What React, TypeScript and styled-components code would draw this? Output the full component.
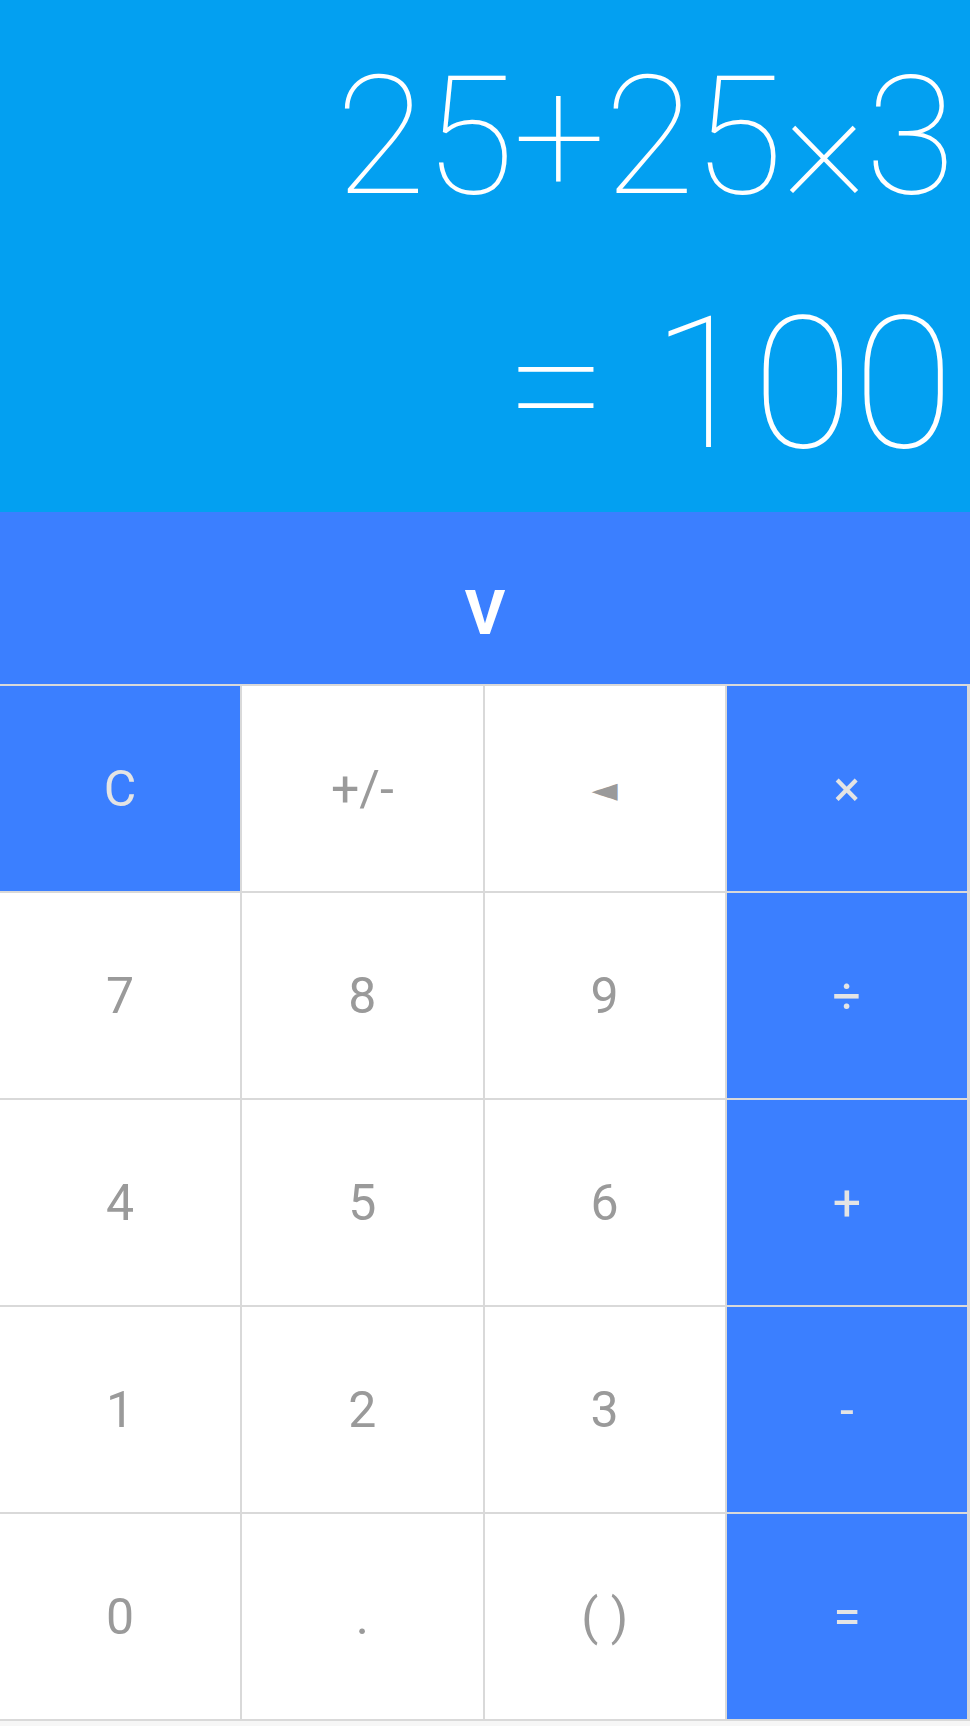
import React from "react"
import styled, { createGlobalStyle } from "styled-components"

const colors = {
  sky: "#03a0f1",
  blue: "#3b7fff",
  line: "#d9d9d9",
  keyText: "#9a9a9a",
  lightText: "#e4e4e4",
  page: "#f6f6f6",
}

const GlobalStyle = createGlobalStyle`
  html, body {
    margin: 0;
    padding: 0;
    background: ${colors.page};
    font-family: Roboto, "Liberation Sans", sans-serif;
  }
  * {
    box-sizing: border-box;
  }
`

const Wrapper = styled.div`
  width: 970px;
  display: flex;
  flex-direction: column;
`

const Display = styled.div`
  height: 512px;
  background: ${colors.sky};
  color: white;
  display: flex;
  flex-direction: column;
  align-items: flex-end;
  padding: 54px 16px 0 0;
  font-weight: 100;
`

const Expression = styled.div`
  font-size: 165px;
  line-height: 1;
  letter-spacing: -1.5px;
  white-space: nowrap;
`

const Result = styled.div`
  font-size: 184px;
  line-height: 1;
  margin-top: 73px;
  white-space: nowrap;
`

const Toggle = styled.div`
  height: 172px;
  background: ${colors.blue};
  color: white;
  display: flex;
  justify-content: center;
  padding-top: 70px;
  font-size: 62px;
  font-weight: 700;
  line-height: 1;
`

const Keypad = styled.div`
  display: grid;
  grid-template-columns: repeat(4, 1fr);
  grid-template-rows: repeat(5, 205px);
  gap: 2px;
  padding: 2px 3px 2px 0;
  background: ${colors.line};
`

interface KeyProps {
  $accent?: boolean
}

const Key = styled.div<KeyProps>`
  display: flex;
  justify-content: center;
  align-items: center;
  background: ${props => (props.$accent ? colors.blue : "white")};
  color: ${props => (props.$accent ? colors.lightText : colors.keyText)};
  font-size: 50px;
  line-height: 1;
`

const Arrow = styled.span`
  font-family: "DejaVu Sans", sans-serif;
  font-size: 34px;
`

const keys: { label: React.ReactNode; accent?: boolean }[] = [
  { label: "C", accent: true },
  { label: "+/-" },
  { label: <Arrow>◄</Arrow> },
  { label: "×", accent: true },
  { label: "7" },
  { label: "8" },
  { label: "9" },
  { label: "÷", accent: true },
  { label: "4" },
  { label: "5" },
  { label: "6" },
  { label: "+", accent: true },
  { label: "1" },
  { label: "2" },
  { label: "3" },
  { label: "-", accent: true },
  { label: "0" },
  { label: "." },
  { label: "( )" },
  { label: "=", accent: true },
]

export default function App() {
  return (
    <Wrapper>
      <GlobalStyle />
      <Display>
        <Expression>25+25×3</Expression>
        <Result>= 100</Result>
      </Display>
      <Toggle>V</Toggle>
      <Keypad>
        {keys.map((key, i) => (
          <Key key={i} $accent={key.accent}>
            {key.label}
          </Key>
        ))}
      </Keypad>
    </Wrapper>
  )
}
